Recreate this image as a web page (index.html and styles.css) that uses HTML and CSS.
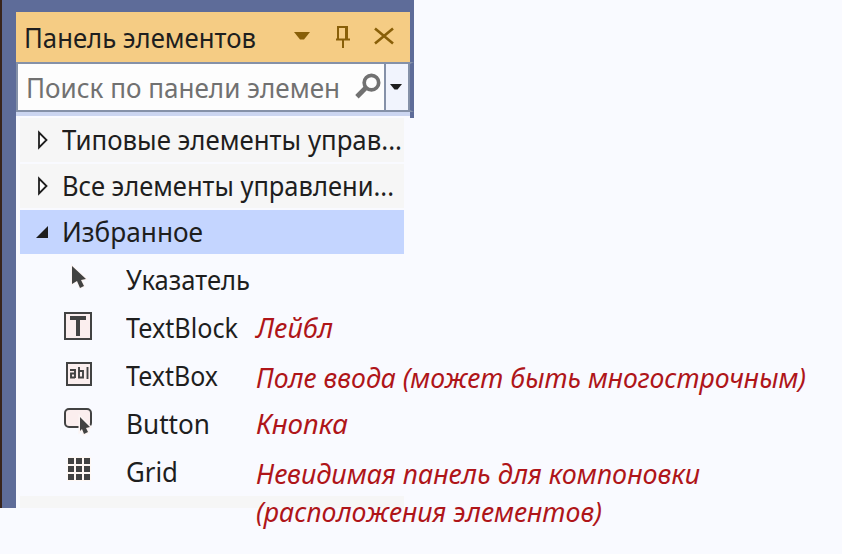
FILE: index.html
```html
<!DOCTYPE html>
<html lang="ru">
<head>
<meta charset="utf-8">
<title>Панель элементов</title>
<link rel="stylesheet" href="styles.css">
</head>
<body>
<main class="panel">
  <div class="frame-top"></div>
  <header class="title">
    <span class="fit" data-w="232">Панель элементов</span>
    <svg class="title-icons" width="100" height="50" viewBox="0 0 100 50">
      <path d="M0 20H16L10 27.500H6Z" fill="#895f08"/>
      <g fill="none" stroke="#895f08" stroke-width="2"><path d="M44 27V15H53V27M42 27.500H56M49 27V36"/><path d="M52.500 14V27" stroke-width="3"/><path d="M81 16.500L99 31.500M99 16.500L81 31.500" stroke-width="2.600"/></g>
    </svg>
  </header>
  <div class="search">
    <div class="search-field"><span class="fit" data-w="314">Поиск по панели элемен</span></div>
    <svg class="lens" width="30" height="46" viewBox="0 0 30 46"><circle cx="17" cy="18.500" r="7.500" fill="none" stroke="#717171" stroke-width="3.800"/><path d="M12 23L2 33" stroke="#717171" stroke-width="5"/></svg>
    <div class="drop"><svg width="22" height="46" viewBox="0 0 22 46"><path d="M4 20H16L11.500 25.500H8.500Z" fill="#1e1e1e"/></svg></div>
  </div>
  <div class="strip"></div>
  <section class="tree">
    <div class="group"><svg class="arrow" width="14" height="20" viewBox="0 0 14 20"><path d="M3 2.500V17.500L10.500 10Z" fill="#fff" stroke="#1e1e1e" stroke-width="1.800"/></svg><span class="fit" data-w="340">Типовые элементы управ...</span></div>
    <div class="group"><svg class="arrow" width="14" height="20" viewBox="0 0 14 20"><path d="M3 2.500V17.500L10.500 10Z" fill="#fff" stroke="#1e1e1e" stroke-width="1.800"/></svg><span class="fit" data-w="332">Все элементы управлени...</span></div>
    <div class="group selected"><svg class="arrow" width="14" height="20" viewBox="0 0 14 20"><path d="M0 16L12 4V16Z" fill="#1e1e1e"/></svg><span class="fit" data-w="141">Избранное</span></div>
    <div class="item">
      <svg class="icon" width="28" height="28" viewBox="0 0 28 28"><path d="M8 2L22 15L17 16L20 22L16 24L13 17L8 20Z" fill="#424242" stroke="#fcf4f3" stroke-width="2" paint-order="stroke"/></svg>
      <div class="name"><span class="fit" data-w="124">Указатель</span></div>
    </div>
    <div class="item">
      <svg class="icon" width="28" height="28" viewBox="0 0 28 28"><path d="M1 1H27V27H1Z" fill="#fbeeee" stroke="#424242" stroke-width="2"/><path d="M6 4H22V8H16V24H12V8H6Z" fill="#424242"/></svg>
      <div class="name"><span class="fit" data-w="112">TextBlock</span></div>
      <div class="note"><span class="fit" data-w="77">Лейбл</span></div>
    </div>
    <div class="item">
      <svg class="icon" width="28" height="28" viewBox="0 0 28 28"><path d="M3 3H27V25H3Z" fill="#fbeeee" stroke="#424242" stroke-width="2"/><path d="M6 10H11V18M11 13.500H7V17.500H11M15 7V17.500H19V11H15M23.500 7V19" fill="none" stroke="#424242" stroke-width="1.900"/></svg>
      <div class="name"><span class="fit" data-w="92">TextBox</span></div>
      <div class="note lowered"><span class="fit" data-w="550">Поле ввода (может быть многострочным)</span></div>
    </div>
    <div class="item">
      <svg class="icon" width="28" height="28" viewBox="0 0 28 28"><rect x="1" y="1" width="26" height="18" rx="4" fill="#fbeeee" stroke="#424242" stroke-width="2"/><path d="M16 9L26 19L22 20L24 24L20 26L18 21L16 23Z" fill="#424242" stroke="#fcf4f3" stroke-width="3" paint-order="stroke"/></svg>
      <div class="name"><span class="fit" data-w="84">Button</span></div>
      <div class="note"><span class="fit" data-w="92">Кнопка</span></div>
    </div>
    <div class="item">
      <svg class="icon" width="28" height="28" viewBox="0 0 28 28"><path d="M3 1H27V25H3Z" fill="#fff8f4"/><path d="M4 2h6v6H4zM12 2h6v6h-6zM20 2h6v6h-6zM4 10h6v6H4zM12 10h6v6h-6zM20 10h6v6h-6zM4 18h6v6H4zM12 18h6v6h-6zM20 18h6v6h-6z" fill="#424242"/></svg>
      <div class="name"><span class="fit" data-w="52">Grid</span></div>
      <div class="note two-lines"><span class="fit" data-w="444">Невидимая панель для компоновки</span><span class="fit" data-w="346">(расположения элементов)</span></div>
    </div>
    <div class="next-group"></div>
  </section>
</main>
<script src="fit.js"></script>
</body>
</html>
```
FILE: styles.css
```css
* { box-sizing: border-box; }
body { margin: 0; height: 554px; overflow: hidden; background: #f9faff; font-family: "Noto Sans", "Open Sans", sans-serif; font-size: 28px; color: #1e1e1e; }
.panel { width: 414px; height: 508px; padding-left: 16px; background: linear-gradient(90deg, #38241c 2px, #5e6c99 2px, #5e6c99 16px, transparent 16px); }
.frame-top { height: 12px; background: #5e6c99; }
.fit { display: inline-block; white-space: nowrap; transform-origin: 0 50%; }
.title { height: 50px; display: flex; border-right: 4px solid #5e6c99; background: #f5cc84; padding-left: 8px; line-height: 50px; }
.title .fit { width: 270px; flex: none; }
.title-icons { flex: none; }
.search { display: flex; height: 50px; width: 398px; border: 2px solid #8591a8; border-right: 4px solid #5e6c99; background: #fdfdfd; }
.search-field { width: 337px; padding-left: 8px; line-height: 46px; color: #717171; overflow: hidden; flex: none; }
.lens { flex: none; width: 29px; }
.drop { width: 26px; flex: none; border: solid #8591a8; border-width: 0 2px; background: #f1f4fd; }
.drop svg, .icon, .arrow { display: block; flex: none; }
.strip { height: 4px; width: 394px; background: #cbd5f0; box-shadow: 4px 0 #5e6c99, 4px 2px #5e6c99; }
.tree { position: relative; width: 394px; padding: 2px 6px 0 4px; background: #f9faff; }
.group { height: 44px; margin-bottom: 2px; padding-left: 16px; display: flex; align-items: center; background: #f6f6f6; line-height: 42px; }
.group .fit { margin: -2px 0 0 12px; }
.group.selected { background: #c4d5ff; margin-bottom: 1px; }
.item { position: relative; z-index: 1; height: 48px; display: flex; padding-left: 44px; line-height: 48px; }
.icon { margin: 9px 34px 0 0; }
.name { width: 130px; flex: none; }
.note { flex: none; color: #af1519; font-style: italic; }
.lowered { margin-top: 2px; }
.two-lines { display: flex; flex-direction: column; align-items: flex-start; line-height: 38px; padding-top: 7px; height: 83px; }
.next-group { height: 12px; margin-top: 1px; background: #f6f6f6; }
```
FILE: fit.js
```js
document.querySelectorAll('.fit').forEach(function (el) {
  var range = document.createRange();
  range.selectNodeContents(el);
  var natural = range.getBoundingClientRect().width;
  el.style.transform = 'scaleX(' + el.dataset.w / natural + ')';
});
```
